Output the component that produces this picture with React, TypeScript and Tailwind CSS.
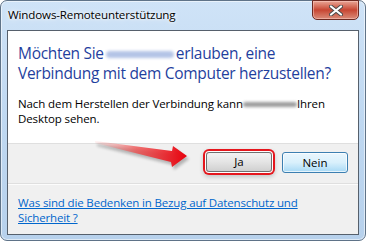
export default function App() {
  return (
    <div className="w-[366px] h-[241px] bg-white font-['Open_Sans',sans-serif]">
      <div className="relative flex flex-col w-[366px] h-[241px] rounded-[7px] border border-[#5f7388] bg-gradient-to-b from-[#cfe3f7] via-[#bfd8f1] to-[#b7d1ec] shadow-[inset_0_0_0_1px_rgba(255,255,255,0.55)]">
        {/* Title bar */}
        <div className="flex items-center h-[29px] pl-[7px] pb-[2px] text-[11.6px] text-black tracking-[-0.15px] [text-shadow:0_0_6px_#fff,0_0_3px_#fff]">
          Windows-Remoteunterstützung
        </div>
        <CloseButton />

        {/* Client area */}
        <div className="flex flex-col flex-1 mx-[6px] mb-[5px] border border-[#56606c] bg-[#f0f0f0]">
          <div className="h-[112px] bg-white px-[10px] pt-[12px]">
            <div className="text-[15.5px] leading-[20px] text-[#1f3f9e] tracking-[-0.3px]">
              Möchten Sie
              <span className="inline-block align-middle w-[68px] h-[7px] mx-[2px] rounded-full bg-[#b4c4e6] blur-[1.5px]" />
              erlauben, eine
              <br />
              Verbindung mit dem Computer herzustellen?
            </div>
            <div className="mt-[13px] text-[11.5px] leading-[15px] text-black tracking-[-0.1px]">
              Nach dem Herstellen der Verbindung kann
              <span className="inline-block align-middle w-[54px] h-[5px] rounded-full bg-[#9c9c9c] blur-[1.5px]" />
              Ihren
              <br />
              Desktop sehen.
            </div>
          </div>
          <div className="h-px bg-[#dfdfdf]" />
          <div className="relative flex justify-end items-start gap-[10px] h-[39px] pt-[8px] pr-[10px]">
            <Arrow />
            <button className="w-[66px] h-[20px] rounded-[3px] border border-[#707070] bg-gradient-to-b from-[#f3f3f3] via-[#e4e4e4] to-[#d0d0d0] text-[11.5px] leading-none text-black shadow-[0_0_0_1px_#fff,0_0_0_3px_#e5161d,0_2px_4px_3px_rgba(0,0,0,0.18)]">
              Ja
            </button>
            <button className="w-[66px] h-[21px] rounded-[3px] border border-[#3c7fb1] bg-gradient-to-b from-[#eaf6fd] via-[#d9f0fc] to-[#a7d9f5] text-[11.5px] leading-none text-black shadow-[inset_0_0_0_1px_rgba(255,255,255,0.7)]">
              Nein
            </button>
          </div>
          <div className="h-px bg-[#fcfcfc] border-t border-[#dfdfdf] box-content" />
          <div className="flex-1 px-[10px] pt-[10px] text-[11.5px] leading-[15px] tracking-[-0.15px]">
            <a className="text-[#0066cc] underline underline-offset-[1px]">
              Was sind die Bedenken in Bezug auf Datenschutz und
              <br />
              Sicherheit ?
            </a>
          </div>
        </div>
      </div>
    </div>
  );
}

function CloseButton() {
  return (
    <div className="absolute top-[-1px] right-[6px] flex items-center justify-center w-[47px] h-[20px] rounded-b-[5px] border border-[#6e2a22] bg-gradient-to-b from-[#e8a596] via-[#c74532] to-[#d98a78] shadow-[inset_0_0_0_1px_rgba(255,210,200,0.5)]">
      <svg width="14" height="11" viewBox="0 0 14 11">
        <path d="M2 1.5 L12 9.5 M12 1.5 L2 9.5" stroke="#4a4a4a" strokeWidth="4" strokeLinecap="round" />
        <path d="M2 1.5 L12 9.5 M12 1.5 L2 9.5" stroke="#fff" strokeWidth="2.2" strokeLinecap="round" />
      </svg>
    </div>
  );
}

function Arrow() {
  return (
    <svg className="absolute left-[80px] top-[-6px]" width="110" height="34" viewBox="0 0 110 34">
      <defs>
        <linearGradient id="arrowFill" x1="0" y1="0" x2="1" y2="0">
          <stop offset="0" stopColor="#ff8a8a" stopOpacity="0.1" />
          <stop offset="0.45" stopColor="#f04848" stopOpacity="0.75" />
          <stop offset="1" stopColor="#e8000c" />
        </linearGradient>
        <filter id="arrowShadow" x="-10%" y="-30%" width="130%" height="180%">
          <feGaussianBlur stdDeviation="1.6" />
        </filter>
      </defs>
      <polygon
        points="7,3 84,13 85,8 99,18 84,29 83,24 7,5"
        fill="#000"
        opacity="0.25"
        transform="translate(2,3)"
        filter="url(#arrowShadow)"
      />
      <polygon points="7,3 84,13 85,8 99,18 84,29 83,24 7,5" fill="url(#arrowFill)" />
    </svg>
  );
}
